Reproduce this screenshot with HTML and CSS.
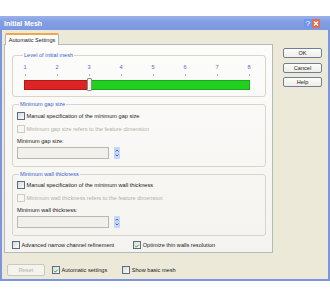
FILE: index.html
```html
<!DOCTYPE html>
<html>
<head>
<meta charset="utf-8">
<title>Initial Mesh</title>
<link rel="stylesheet" href="styles.css">
</head>
<body>
<div class="window">
  <div class="titlebar">
    <span class="title">Initial Mesh</span>
    <div class="tbtns">
      <span class="tbtn help">?</span>
      <span class="tbtn close"><svg width="8" height="9" viewBox="0 0 8 9"><path d="M2 2.5 L6 6.5 M6 2.5 L2 6.5" stroke="#fff" stroke-width="1.3" fill="none"/></svg></span>
    </div>
  </div>
  <div class="main">
    <div class="left">
      <div class="tabs"><div class="tab">Automatic Settings</div></div>
      <div class="panel">
        <fieldset class="group g1">
          <legend>Level of initial mesh</legend>
          <div class="scale">
            <span class="num">1<i class="tick"></i></span>
            <span class="num">2<i class="tick"></i></span>
            <span class="num">3<i class="tick"></i></span>
            <span class="num">4<i class="tick"></i></span>
            <span class="num">5<i class="tick"></i></span>
            <span class="num">6<i class="tick"></i></span>
            <span class="num">7<i class="tick"></i></span>
            <span class="num">8<i class="tick"></i></span>
          </div>
          <div class="bar">
            <div class="red"></div>
            <div class="green"></div>
            <div class="thumb"></div>
          </div>
        </fieldset>
        <fieldset class="group">
          <legend>Minimum gap size</legend>
          <label class="check"><span class="box"></span>Manual specification of the minimum gap size</label>
          <label class="check disabled"><span class="box"></span>Minimum gap size refers to the feature dimension</label>
          <div class="field-label">Minimum gap size:</div>
          <div class="spinrow">
            <div class="input"></div>
            <div class="spin"><svg width="6" height="12" viewBox="0 0 6 12"><path d="M1.5 4.5 L3 3 L4.5 4.5" stroke="#3f5f9c" stroke-width="0.9" fill="none"/><path d="M1.5 7.5 L3 9 L4.5 7.5" stroke="#3f5f9c" stroke-width="0.9" fill="none"/></svg></div>
          </div>
        </fieldset>
        <fieldset class="group">
          <legend>Minimum wall thickness</legend>
          <label class="check"><span class="box"></span>Manual specification of the minimum wall thickness</label>
          <label class="check disabled"><span class="box"></span>Minimum wall thickness refers to the feature dimension</label>
          <div class="field-label">Minimum wall thickness:</div>
          <div class="spinrow">
            <div class="input"></div>
            <div class="spin"><svg width="6" height="12" viewBox="0 0 6 12"><path d="M1.5 4.5 L3 3 L4.5 4.5" stroke="#3f5f9c" stroke-width="0.9" fill="none"/><path d="M1.5 7.5 L3 9 L4.5 7.5" stroke="#3f5f9c" stroke-width="0.9" fill="none"/></svg></div>
          </div>
        </fieldset>
        <div class="opts">
          <label class="check"><span class="box"></span>Advanced narrow channel refinement</label>
          <label class="check opt2"><span class="box checked"><svg width="8" height="8" viewBox="0 0 8 8"><path d="M1.6 3.8 L3.2 5.5 L6.4 2.2" stroke="#21a121" stroke-width="1.3" fill="none"/></svg></span>Optimize thin walls resolution</label>
        </div>
      </div>
    </div>
    <div class="right">
      <button class="btn">OK</button>
      <button class="btn">Cancel</button>
      <button class="btn">Help</button>
    </div>
  </div>
  <div class="footer">
    <button class="btn reset" disabled>Reset</button>
    <label class="check auto"><span class="box checked"><svg width="8" height="8" viewBox="0 0 8 8"><path d="M1.6 3.8 L3.2 5.5 L6.4 2.2" stroke="#21a121" stroke-width="1.3" fill="none"/></svg></span>Automatic settings</label>
    <label class="check basic"><span class="box"></span>Show basic mesh</label>
  </div>
</div>
</body>
</html>
```
FILE: styles.css
```css
* { box-sizing: border-box; }

body {
  margin: 0;
  padding-top: 16px;
  background: #fff;
  font-family: "Liberation Sans", Arial, sans-serif;
  font-size: 5.6px;
  color: #1a1a1a;
}

.window {
  width: 330px;
  height: 265px;
  background: #ece9d8;
  border: 2px solid #7d94de;
  border-top: 0;
  display: flex;
  flex-direction: column;
}

.titlebar {
  height: 14px;
  margin: 0 -2px;
  padding: 0 10px 0 4px;
  background: linear-gradient(#9bb2ea, #839ee2 40%, #7c98df);
  display: flex;
  align-items: center;
}

.title {
  color: #fff;
  font-weight: bold;
  font-size: 7px;
}

.tbtns {
  margin-left: auto;
  display: flex;
}

.tbtn {
  width: 8px;
  height: 9px;
  border-radius: 1px;
  display: flex;
  align-items: center;
  justify-content: center;
  color: #fff;
  font-size: 8px;
}

.help { background: #6f97ea; }
.close { background: #e06c55; }

.main {
  display: flex;
  padding: 3px 0 0 2px;
}

.left { width: 269px; }

.tabs {
  display: flex;
  height: 12px;
  padding-left: 1px;
  margin-bottom: -1px;
  position: relative;
  z-index: 1;
}

.tab {
  width: 54px;
  height: 12px;
  background: #fcfcfc;
  border: 1px solid #b0b4b4;
  border-top: 2px solid #f0a64a;
  border-bottom: 0;
  border-radius: 2px 2px 0 0;
  display: flex;
  align-items: center;
  justify-content: center;
}

.panel {
  height: 209px;
  border: 1px solid #b6bab8;
  background: linear-gradient(#fcfcfb, #f4f3ef);
  padding: 7px 6px 0 7px;
}

.group {
  margin: 0;
  min-width: 0;
  border: 1px solid #d8d6cb;
  border-radius: 3px;
  padding: 1px 4px 7px 4px;
}

.group + .group { margin-top: 4px; }

.group legend {
  padding: 0 1px;
  margin-left: 2px;
  line-height: 7px;
  height: 7px;
  color: #3c62cc;
}

.g1 { padding: 5px 0 6px 8px; }

.scale {
  width: 232px;
  display: flex;
  justify-content: space-between;
}

.num {
  width: 8px;
  display: flex;
  flex-direction: column;
  align-items: center;
  line-height: 7px;
  color: #5070c0;
}

.tick {
  width: 1px;
  height: 2px;
  margin-top: 3px;
  background: #a8b0c0;
}

.bar {
  position: relative;
  margin: 4px 0 0 3px;
  width: 226px;
  height: 10px;
  display: flex;
}

.red {
  width: 64px;
  background: #dc2424;
  border: 1px solid #b21a1a;
  border-right: 0;
}

.green {
  flex: 1;
  background: #21d021;
  border: 1px solid #1aa81a;
  border-left: 0;
}

.thumb {
  position: absolute;
  left: 63px;
  top: -2px;
  width: 5px;
  height: 13px;
  background: linear-gradient(90deg, #ffffff, #e4e4e0);
  border: 1px solid #8c8c88;
  border-radius: 1px;
}

.check {
  display: flex;
  align-items: center;
  height: 13px;
  white-space: nowrap;
}

.box {
  width: 8px;
  height: 8px;
  margin-right: 1.5px;
  flex: none;
  border: 1px solid #5a6c88;
  background: linear-gradient(135deg, #dcdcd4, #fafaf8);
  display: flex;
}

.disabled { color: #b4b2a6; }
.disabled .box {
  border-color: #cfcdc3;
  background: #f6f6f2;
}

.field-label {
  height: 11.5px;
  display: flex;
  align-items: center;
}

.spinrow {
  display: flex;
  align-items: center;
}

.input {
  width: 92px;
  height: 12px;
  border: 1px solid #b8b8b0;
  background: #f1f0ea;
}

.spin {
  width: 6px;
  height: 12px;
  margin-left: 5px;
  background: #c4d6fa;
  border-radius: 1px;
  display: flex;
}

.opts {
  margin-top: 3px;
  display: flex;
  height: 12px;
}

.opts .check { height: 12px; }
.opt2 { margin-left: 19px; }

.right {
  margin-left: 10px;
  padding-top: 15px;
  display: flex;
  flex-direction: column;
  gap: 4.5px;
}

.btn {
  width: 39px;
  height: 10px;
  padding: 0;
  font: inherit;
  color: #1a1a1a;
  background: linear-gradient(#fdfdfb, #eeede6);
  border: 1px solid #6f8096;
  border-radius: 2px;
}

.footer {
  display: flex;
  align-items: center;
  padding: 10px 0 0 5px;
}

.reset {
  width: 38px;
  height: 12px;
  color: #b4b2a6;
  border-color: #cbc9bc;
  background: #f4f3ee;
}

.auto { margin-left: 7px; }
.basic { margin-left: 15px; }
```
